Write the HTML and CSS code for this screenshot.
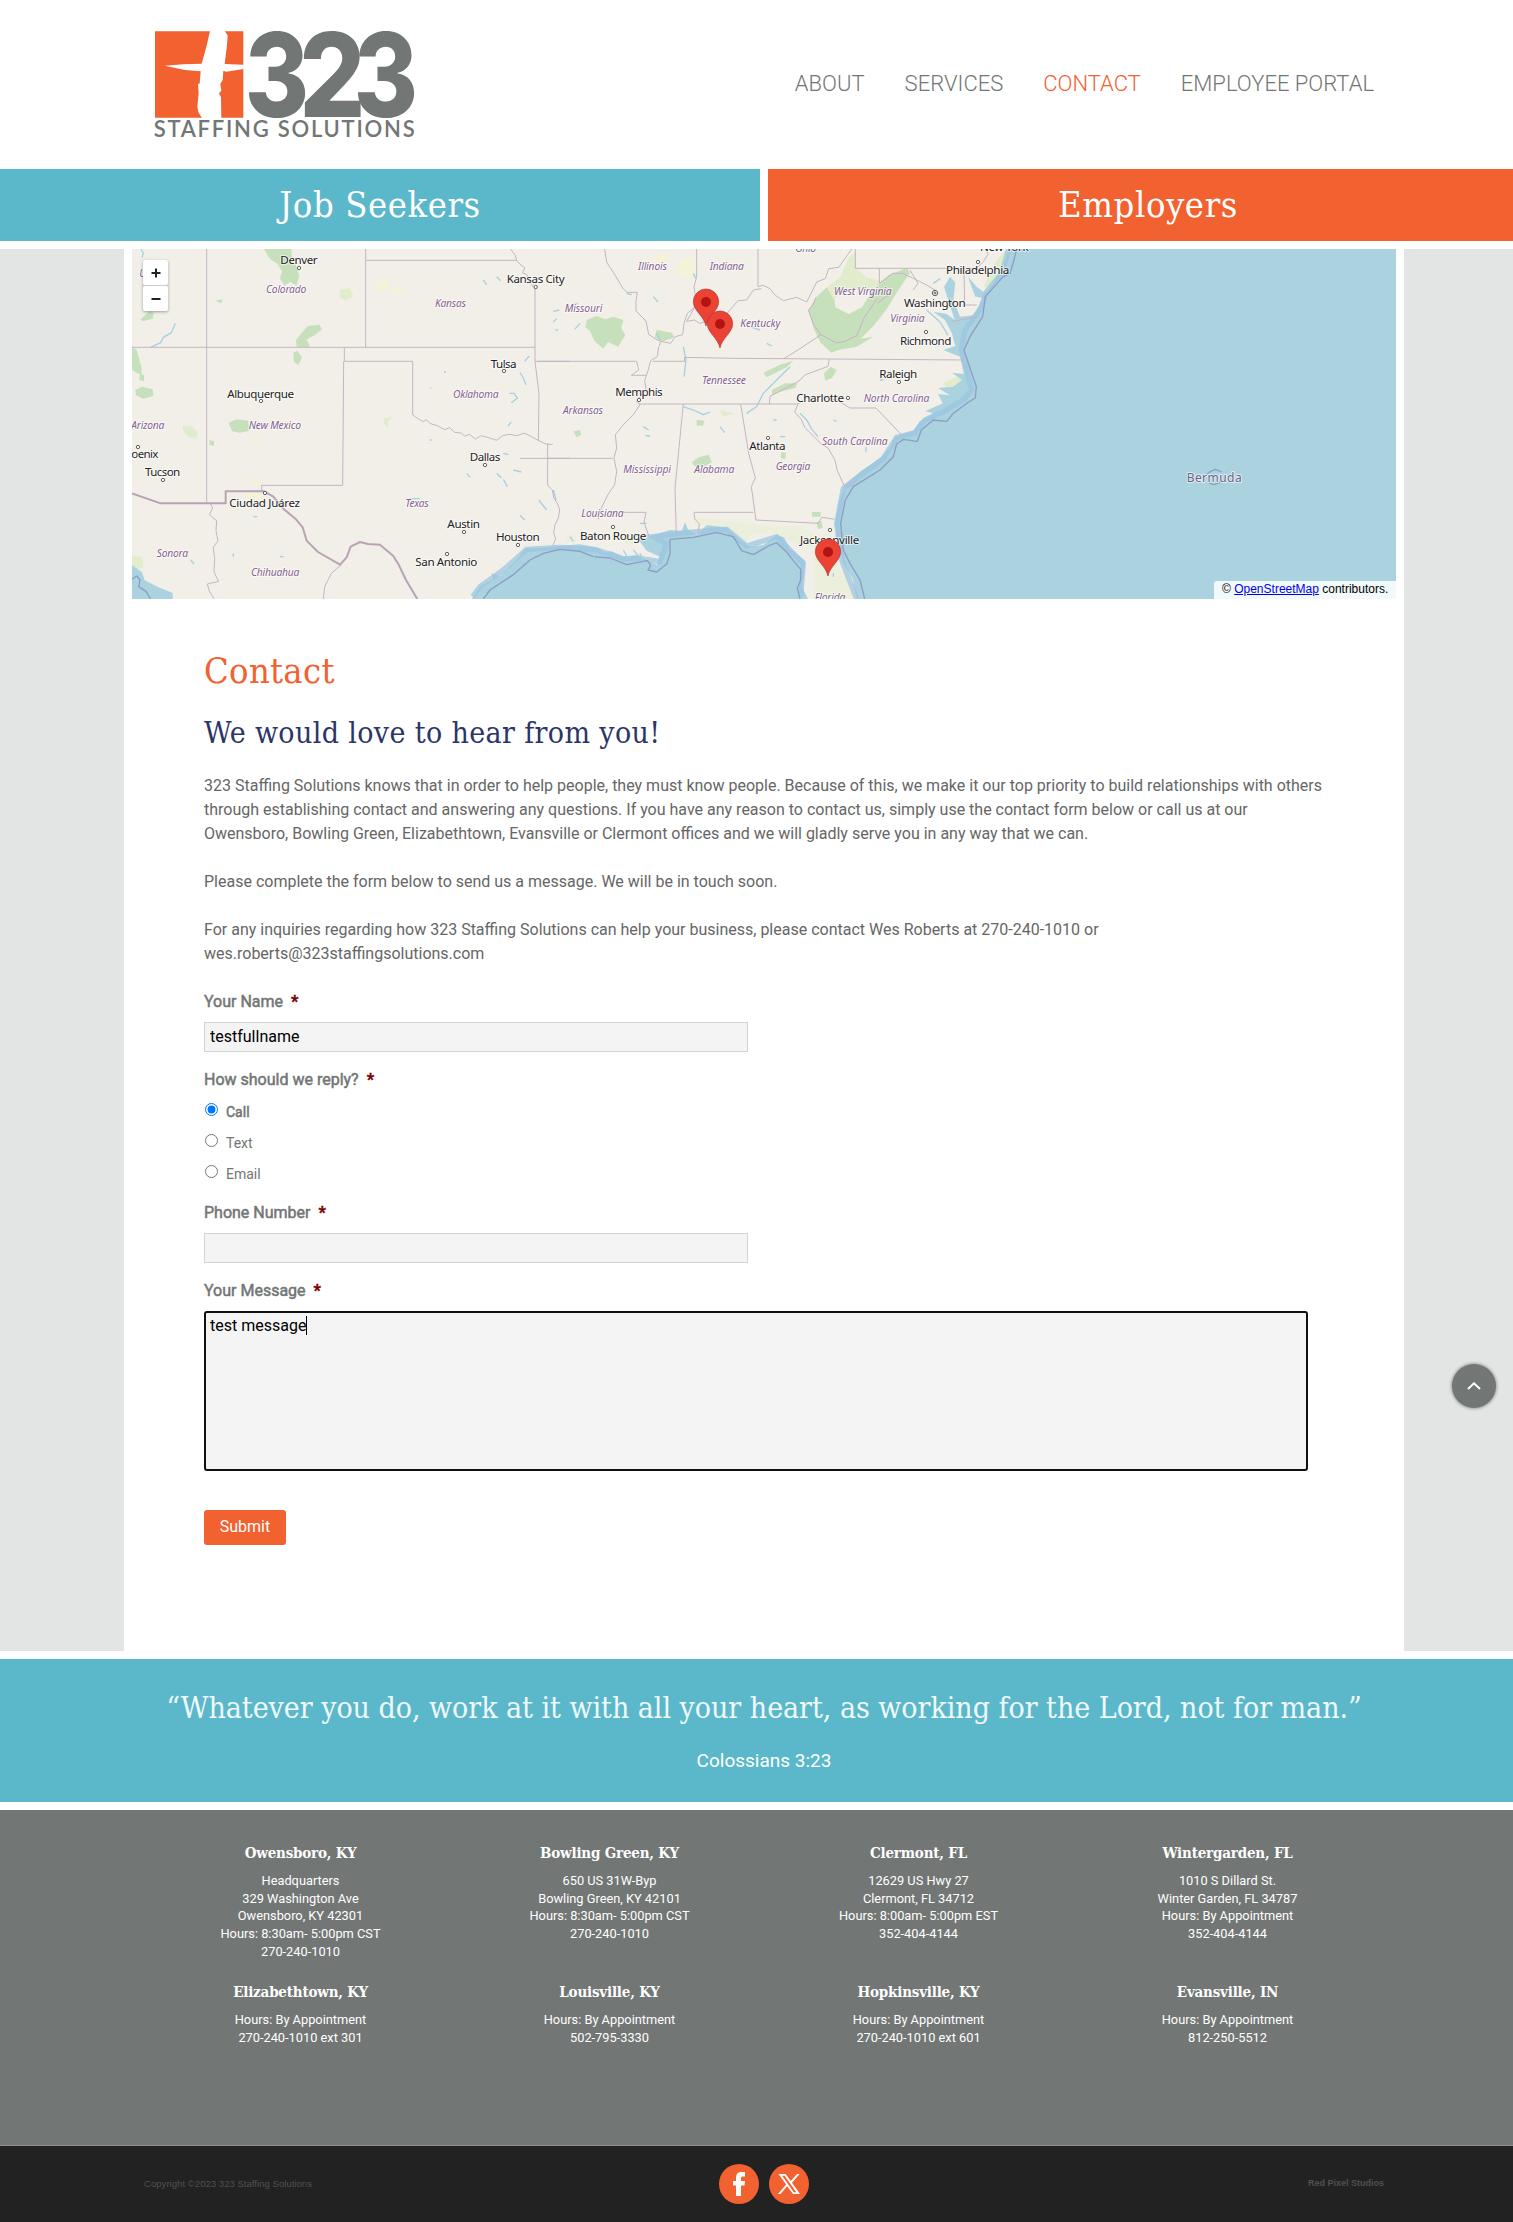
FILE: index.html
```html
<!DOCTYPE html>
<html lang="en">
<head>
<meta charset="utf-8">
<title>Contact | 323 Staffing Solutions</title>
<link rel="stylesheet" href="styles.css">
</head>
<body>
<div class="page">
  <header class="header">
    <svg class="logo" viewBox="48 72 840 360" role="img" aria-label="323 Staffing Solutions">
      <path class="logo-box" d="M75 94H340V353H75Z"/>
      <path class="logo-cross" d="M240 93L284 93L293 106L291 135L284 192L341 194V207L288 215L280 212L278 240L271 252L274 272L267 280L273 292L274 354H216L206 338L202 320L206 280L204 253L209 250L212 214L165 210L104 197L160 193L215 191L230 137Z"/>
      <g class="logo-num">
        <text transform="translate(344 352) scale(.84 1)">3</text>
        <text transform="translate(508 352) scale(.89 1)">2</text>
        <text transform="translate(671 352) scale(.84 1)">3</text>
      </g>
      <text class="logo-sub" x="71" y="412" textLength="783">STAFFING SOLUTIONS</text>
    </svg>
    <nav class="nav">
      <a>ABOUT</a><a>SERVICES</a><a class="active">CONTACT</a><a>EMPLOYEE PORTAL</a>
    </nav>
  </header>

  <div class="cta">
    <a class="cta-item teal">Job Seekers</a>
    <a class="cta-item orange">Employers</a>
  </div>

  <div class="main">
    <main class="card">
      <div class="map">
        <svg class="map-svg" viewBox="0 0 1264 350">
          <g transform="translate(-12 -9) scale(.33333)">
            <g class="green">
              <path d="M432 27h82l2 30 12 20 10 30-8 30-20-12-16 12-14-22 6-20-12-22-24-16z"/>
              <path d="M528 300l16-20 20-22 34-4 8 14-22 18-24 12 10 22-40 2z"/>
              <path d="M36 320l14 10 14 50 2 26-14-6-16-10zM46 450l20-10 32 8 2 20-30 8-22-10zM60 400l12 6v18l-14-4z"/>
              <path d="M326 548l24-10 34 4 4 30-30 6-22-4zM520 338l12-6 14 20-10 22-14-8zM268 600l14 4v14l-14-4zM284 182l24-4-4 12zM62 238l26-24 14 4-4 18-30 8z"/>
              <path class="pale" d="M190 556l24 2 20 20-6 16-24-4-16-20zM660 150l28-6 12 24-24 14-16-8zM790 535l30-4-18 14 6 20-14-10zM36 946l30 4 4 30-20 12-14-14z"/>
            </g>
            <path class="sand" d="M378 715l30 2 20 22-24-4zM398 590l18-2-4 24-12-6zM770 120l34 0-4 30-30 6zM820 140l36 4-10 20-30-8zM370 760l60-2 6 20-60-6z"/>
            <path class="water" d="M36 975l30 22 8 24 40 20 44 18v18H36Z"/>
            <path class="sea-line" d="M36 1018l14-10 10 12-4 20 22 14 14 23"/>
            <g class="river">
              <path d="M166 250l-12 28-24 14-8 16-30 14M62 27l8 12-4 14M1200 398l10 16 8 20M1168 460l14 0 10 14-18 14M1228 348l-14 16M1150 718l12 22M1130 700l14 14M1256 780l24 30M1200 826l14 14M1300 750l8 30M1318 210l-18 4M1310 236l-10 10M1090 120l10 14M1174 546l-10 12M972 396h6M930 444h4M930 600h6M400 830h12M340 940v10M480 950h10M212 960l10 12M1150 640l16 4M1180 690l24 6M1040 700l10 12M1306 270h8M870 776h30M1130 110l12 12"/>
            </g>
            <g class="state">
              <path d="M260 27V790M36 322H1245M737 27V322M737 61H1190M673 322V364H878V525M671 364L668 736H425V755M1245 140V364L1257 460L1255 602M1245 364H1350M1283 610V736M1283 655H1350M1190 61l10 12 14 10-6 16 12 4 8 20 12 18M1172 27l14 20 4 14"/>
              <path d="M878 525l18 12 14 8 8-6 14 12 20 6 22 12 14-6 16 14 20 2 10 10 14-6 18 14 18-10 22 6 24 8 18-14 20-4 24 4 20-8 24 12 18 10 26 12h18"/>
              <path d="M1283 736l14 14 4 22 12 20 6 18-4 24-10 20-4 24 6 18-8 20"/>
              <path d="M270 790l8 14-10 20 22 18-2 30 6 30-14 20 4 34-2 40 14 28-34 8 6 22 14 22M664 974l-30 26-20 40-4 37"/>
            </g>
            <path class="country" d="M36 760L122 790H317V754H432L460 770L490 806L528 838L548 862L560 902L594 936L660 974L680 952L692 920L720 906L744 912L780 914L796 928L820 948L836 974L858 1020L892 1077"/>

            <g transform="translate(1320 0)">
              <g class="green">
                <path d="M746 210l24-40 30-28 20 10 6 50 40 20 40-20 30-50 50-46 54-22 10 14-40 60-30 50-40 50-36 36-40 24-50 20-32-30-20-40z"/>
                <path class="pale" d="M800 142l40-30 24-56 20-20 4 46 30 30 40 10-6 30-50-6-50 10-32 20z"/>
                <path d="M80 240l30-12 26 10 24-8 30 10-6 24 12 22-22 34-30-14-14 20-26-22-14-30-14-12zM820 320l60-20 60-10-50 30-70 12zM636 450l40-20 36 0-6 14-40 10-30 10zM610 398l50-24 40-12-20 20-60 30zM792 400l20-20 18 10-14 24-20 8zM40 574l20-4 4 14-14 8zM396 666l20-14 30-8 10 22-24 14-30-2zM410 540l24 2-6 16-18-2zM756 816h26v14h-26zM664 636l14 2-2 20-14-4zM770 846l14-4 4 22-14 4zM290 270l44 8 10 14-40 14-20-14z"/>
                <path class="pale" d="M480 510l44 10-34 10zM600 626l16 0-8 10zM1270 140l40-80 30-33-8 60-34 56zM1150 430l60-30-6 40-30 20z"/>
                <path class="palest" d="M404 830l100 14 90 10 60 4 60 0 60 30 40-10 10 40-60 10-60-20-60-30-60 0-30 30-50-50-100-2zM20 880l30 10-6 20-30-6zM180 880l60 8 20 20-60 6zM760 940l60 20 40 50 20 67-120 0 4-60z"/>
              </g>
              <path class="sand" d="M360 60l36-10 20 40-30 24-40-10zM280 50l40-10 10 20-40 14z"/>
              <path class="water" d="M-265 1077L-240 1038L-200 1018L-206 1000L-180 1008L-130 960L-105 925L-70 925L0 918L60 913L110 922L130 936L155 934L190 950L230 945L290 975L300 950L260 932L236 900L280 886L330 870L366 872L375 846L384 868L410 884L440 856L500 862L540 900L570 920L610 915L650 885L672 892L690 926L735 962L732 1000L726 1040L744 1077H890L878 1016L850 968L832 905L825 850L838 780L855 735L900 695L960 655L988 625L1005 590L1060 572L1078 545L1120 520L1095 514L1148 490L1134 462L1170 466L1134 444L1180 440L1206 420L1176 398L1212 402L1200 350L1150 330L1186 318L1176 280L1155 240L1120 215L1160 222L1184 240L1168 190L1152 140L1170 110L1186 128L1180 180L1200 230L1240 226L1256 200L1268 174L1246 170L1224 110L1250 140L1276 160L1300 130L1330 80L1345 27H2508V1077Z"/>
              <path class="shelf" d="M-262 1070L-240 1040L-170 990L-100 928L0 922L110 930L190 956L240 955L300 965L320 910L280 890L400 876L500 868L560 918L650 890L700 940L730 970L722 1070M890 1077L845 960L830 850L850 745L970 655L1010 592L1065 578L1095 540L1150 515L1210 480L1235 450L1220 390L1204 330L1215 270L1262 205L1280 155L1325 100L1346 27"/>
              <path class="sea-line" d="M-230 1077L-210 1050L-140 1004L-90 960L-50 940L0 928L60 934L100 950L150 954L200 974L262 962L272 976L264 990L290 996L320 972L330 942L330 898L400 892L470 878L520 890L545 932L580 944L625 918L650 908L680 936L700 962L722 988L722 1020L712 1045L720 1077M914 1077L900 1020L870 970L850 930L842 850L856 780L880 740L960 690L1000 650L1010 612L1030 598L1072 604L1084 570L1120 540L1160 544L1180 520L1226 486L1246 474L1249 440L1232 390L1212 330L1230 290L1268 230L1276 170L1330 110L1350 100L1362 60L1370 27"/>
              <g class="river">
                <path d="M720 520l20 20 14 26 20 24M560 520l30-20 20-40 40-40 40-40M370 320l8 40-6 50M370 500l30 10 30 14 20-8M250 560l16 10M256 586l14 2M480 560l14 18M918 622v14M820 540l10 4M876 590h6M660 590l16 0M290 280l10 20M640 540h10M570 260l30 10M60 250l-16 18M40 190h14M200 160l16 4M400 100l8 16M1100 210l40 36 24 40M1120 130l20-14M190 930l14 24M220 930l16 18M240 940l8 20M240 850h20M120 960l20 8M100 950l10 18M30 890l10 14M800 980v20M820 1000v10M280 170l14 16M620 310l16 8M960 420h10"/>
              </g>
              <g class="state">
                <path d="M134 27l6 40 20 30 30 50 12 10 30 0-4 26 0 30 30 30 8 40 24 16 10 4M298 318l4-14 30 6 14-20 22-6 4-34 10-30 20-16M410 27V110l-8 30 6 40-8 30-20 34 24-4 14 10 24-6 16 2 30-10 20-24 26-30 26-2 20-30 24-4M594 27V140l16-4 20 10 16 20 24 16 40-10 30 14 30-60 26-10 10-30 30-4 40-56 0-33M886 27V85H1250M958 85V130l40-30 30 0 30 14 40 20 30 18M1050 90l24 40-14 20M952 190l40-30M746 210l12-14 10-24M783 284l-22-30-16-44M783 284l44 24 24-2 40-20 20-50 40-60M783 284L714 330L672 356"/>
                <path d="M-66 364H230l6 26-22 16h44M296 320l-4 30-20 12-8 30-10 30 4 26-28 36 10 10-20 30-30 30-24 30 4 40-8 30 8 40-6 40-20 30-20 40-10 34M278 364H374V352L520 355L808 357L1210 360M808 357l-4 22-70 26-14 16-40 22-50 26-2 24M236 492H714l-10 24 20 22 10 24 50 50 20 12 20 34 8 34 20 44h30M714 492l26-20 40-4 50 12 40 24H948L1024 584M-120 655H158M370 492L345 745L349 885M542 492L566 640L586 714L574 740L588 840L774 850L786 832L824 838M190 817H258l-6 30 14 40M580 817H402l2 20 14 14-4 30M1250 85l20-20 14-22-6-16M1212 85L1214 195H1250M1176 244L1250 232"/>
              </g>
              <g class="city">
                <text x="-839" y="72" textLength="112">Denver</text><text x="-160" y="129" textLength="174">Kansas City</text>
                <text x="-998" y="473" textLength="200">Albuquerque</text><text x="-208" y="383" textLength="78">Tulsa</text>
                <text x="-1286" y="655" textLength="81">oenix</text><text x="-1245" y="708" textLength="106">Tucson</text>
                <text x="-992" y="800" textLength="212">Ciudad Juárez</text><text x="-271" y="663" textLength="92">Dallas</text>
                <text x="-338" y="864" textLength="98">Austin</text><text x="-192" y="904" textLength="131">Houston</text>
                <text x="-434" y="979" textLength="186">San Antonio</text><text x="60" y="899" textLength="199">Baton Rouge</text>
                <text x="166" y="468" textLength="142">Memphis</text><text x="568" y="630" textLength="109">Atlanta</text>
                <text x="709" y="485" textLength="143">Charlotte</text><text x="958" y="414" textLength="114">Raleigh</text>
                <text x="1020" y="314" textLength="154">Richmond</text><text x="1032" y="202" textLength="185">Washington</text>
                <text x="1158" y="103" textLength="190">Philadelphia</text><text x="1260" y="32" textLength="146">New York</text>
                <text x="720" y="912" textLength="178">Jacksonville</text>
              </g>
              <g class="region">
                <text x="-1262" y="112" textLength="44">Uta</text>
                <text x="-882" y="159" textLength="121">Colorado</text><text x="-375" y="202" textLength="93">Kansas</text>
                <text x="-1286" y="567" textLength="99">Arizona</text><text x="-934" y="568" textLength="157">New Mexico</text>
                <text x="-321" y="475" textLength="137">Oklahoma</text><text x="-464" y="802" textLength="70">Texas</text>
                <text x="-1210" y="952" textLength="94">Sonora</text><text x="-927" y="1007" textLength="145">Chihuahua</text>
                <text x="14" y="217" textLength="113">Missouri</text><text x="9" y="521" textLength="120">Arkansas</text>
                <text x="234" y="89" textLength="87">Illinois</text><text x="449" y="90" textLength="103">Indiana</text>
                <text x="706" y="36" textLength="62">Ohio</text><text x="541" y="262" textLength="120">Kentucky</text>
                <text x="822" y="166" textLength="173">West Virginia</text><text x="991" y="247" textLength="103">Virginia</text>
                <text x="426" y="431" textLength="132">Tennessee</text><text x="911" y="487" textLength="197">North Carolina</text>
                <text x="786" y="615" textLength="197">South Carolina</text><text x="647" y="691" textLength="104">Georgia</text>
                <text x="190" y="699" textLength="143">Mississippi</text><text x="403" y="699" textLength="120">Alabama</text>
                <text x="64" y="831" textLength="127">Louisiana</text><text x="764" y="1083" textLength="92">Florida</text>
              </g>
              <g class="dot">
                <circle cx="-783" cy="84" r="5"/><circle cx="-73" cy="141" r="5"/><circle cx="-897" cy="483" r="5"/><circle cx="-168" cy="393" r="5"/>
                <circle cx="-1266" cy="621" r="5"/><circle cx="-1191" cy="720" r="5"/><circle cx="-885" cy="759" r="5"/><circle cx="-225" cy="675" r="5"/>
                <circle cx="-288" cy="876" r="5"/><circle cx="-126" cy="915" r="5"/><circle cx="-339" cy="942" r="5"/><circle cx="159" cy="861" r="5"/>
                <circle cx="237" cy="480" r="5"/><circle cx="624" cy="594" r="5"/><circle cx="864" cy="474" r="5"/><circle cx="1017" cy="426" r="5"/>
                <circle cx="1098" cy="276" r="5"/><circle cx="1125" cy="159" r="8"/><circle cx="1125" cy="159" r="3"/><circle cx="1254" cy="66" r="5"/><circle cx="810" cy="870" r="5"/>
              </g>
              <path class="sea-line" d="M1938 706l14-12 14-6 20 8M1946 728l14 6 20-6"/>
              <text class="island" x="1880" y="725" textLength="165">Bermuda</text>
              <g class="pin">
                <path d="M438 258C432 228 400 212 400 185A38 38 0 0 1 476 185C476 212 444 228 438 258Z"/><circle cx="438" cy="186" r="15"/>
                <path d="M480 324C474 294 442 278 442 251A38 38 0 0 1 518 251C518 278 486 294 480 324Z"/><circle cx="480" cy="252" r="15"/>
                <path d="M804 1008C798 978 766 962 766 935A38 38 0 0 1 842 935C842 962 810 978 804 1008Z"/><circle cx="804" cy="936" r="15"/>
              </g>
            </g>
          </g>
        </svg>
        <div class="zoom">
          <button class="zoom-btn" aria-label="Zoom in"><svg viewBox="0 0 10 10"><path d="M5 0.5V9.5M.5 5H9.5"/></svg></button>
          <button class="zoom-btn" aria-label="Zoom out"><svg viewBox="0 0 10 10"><path d="M.5 5H9.5"/></svg></button>
        </div>
        <div class="credit">© <a href="#">OpenStreetMap</a> contributors.</div>
      </div>

      <section class="content">
        <h1 class="title">Contact</h1>
        <h2 class="subtitle">We would love to hear from you!</h2>
        <p class="text">323 Staffing Solutions knows that in order to help people, they must know people. Because of this, we make it our top priority to build relationships with others<br>through establishing contact and answering any questions. If you have any reason to contact us, simply use the contact form below or call us at our<br>Owensboro, Bowling Green, Elizabethtown, Evansville or Clermont offices and we will gladly serve you in any way that we can.</p>
        <p class="text">Please complete the form below to send us a message. We will be in touch soon.</p>
        <p class="text">For any inquiries regarding how 323 Staffing Solutions can help your business, please contact Wes Roberts at 270-240-1010 or<br>wes.roberts@323staffingsolutions.com</p>
        <form class="form">
          <div class="field">
            <label class="label">Your Name<b class="req">*</b></label>
            <input class="input" type="text" value="testfullname">
          </div>
          <div class="field choices">
            <label class="label">How should we reply?<b class="req">*</b></label>
            <label class="choice picked"><input type="radio" name="r" checked>Call</label>
            <label class="choice"><input type="radio" name="r">Text</label>
            <label class="choice"><input type="radio" name="r">Email</label>
          </div>
          <div class="field">
            <label class="label">Phone Number<b class="req">*</b></label>
            <input class="input" type="text">
          </div>
          <div class="field">
            <label class="label">Your Message<b class="req">*</b></label>
            <div class="area">test message<span class="caret"></span></div>
          </div>
          <button class="submit" type="button">Submit</button>
        </form>
      </section>
    </main>
  </div>

  <section class="quote">
    <p class="verse">“Whatever you do, work at it with all your heart, as working for the Lord, not for man.”</p>
    <p class="source">Colossians 3:23</p>
  </section>

  <section class="offices">
    <div class="office"><h3>Owensboro, KY</h3><p>Headquarters<br>329 Washington Ave<br>Owensboro, KY 42301<br>Hours: 8:30am- 5:00pm CST<br>270-240-1010</p></div>
    <div class="office"><h3>Bowling Green, KY</h3><p>650 US 31W-Byp<br>Bowling Green, KY 42101<br>Hours: 8:30am- 5:00pm CST<br>270-240-1010</p></div>
    <div class="office"><h3>Clermont, FL</h3><p>12629 US Hwy 27<br>Clermont, FL 34712<br>Hours: 8:00am- 5:00pm EST<br>352-404-4144</p></div>
    <div class="office"><h3>Wintergarden, FL</h3><p>1010 S Dillard St.<br>Winter Garden, FL 34787<br>Hours: By Appointment<br>352-404-4144</p></div>
    <div class="office"><h3>Elizabethtown, KY</h3><p>Hours: By Appointment<br>270-240-1010 ext 301</p></div>
    <div class="office"><h3>Louisville, KY</h3><p>Hours: By Appointment<br>502-795-3330</p></div>
    <div class="office"><h3>Hopkinsville, KY</h3><p>Hours: By Appointment<br>270-240-1010 ext 601</p></div>
    <div class="office"><h3>Evansville, IN</h3><p>Hours: By Appointment<br>812-250-5512</p></div>
  </section>

  <footer class="footer">
    <span class="copy">Copyright ©2023 323 Staffing Solutions</span>
    <div class="social">
      <a class="social-link"><svg viewBox="0 0 40 40"><path d="M17 32V21.500H14V17H17V14C17 10 19 8 22.500 8H26V12.500H23.600C22.300 12.500 22 13.200 22 14.300V17H26L25.500 21.500H22V32Z"/></svg></a>
      <a class="social-link"><svg viewBox="0 0 40 40"><path fill-rule="evenodd" d="M9.500 10H16.500L21.800 17.100L28 10H30.600L23 18.700L31 30H24L18.200 22.200L11.500 30H8.900L17.100 20.600ZM13.200 11.800L24.800 28.200H27.300L15.600 11.800Z"/></svg></a>
    </div>
    <span class="credits">Red Pixel Studios</span>
  </footer>
  <a class="to-top" aria-label="Back to top"><svg viewBox="0 0 14 8"><path d="M1 7L7 1.300L13 7"/></svg></a>
</div>
</body>
</html>
```
FILE: styles.css
```css
* { box-sizing: border-box; }
body { margin: 0; background: #fff; overflow: hidden; font-family: Roboto, sans-serif; color: #666; }
h1, h2, h3, p { margin: 0; font-weight: 400; }
.page { position: relative; width: 1528px; }

.header { display: flex; justify-content: space-between; height: 169px; padding: 24px 154px 0 146px; }
.logo { width: 280px; height: 120px; overflow: visible; }
.logo-box { fill: #f26130; }
.logo-cross { fill: #fff; }
.logo-num { fill: #727675; font: 800 350px Inter, sans-serif; }
.logo-sub { fill: #727675; font: 600 66px Lato, sans-serif; }
.nav { display: flex; gap: 40px; padding-top: 44px; font-size: 22px; line-height: 32px; font-weight: 300; color: #727675; white-space: nowrap; }
.nav .active { color: #f26130; }

.cta { display: flex; gap: 8px; height: 72px; }
.cta-item { flex: 1; color: #fff; text-align: center; letter-spacing: .6px; font: 400 36px/72px "Roboto Slab", "DejaVu Serif Condensed", "DejaVu Serif", serif; }
.teal { background: #5ab8ca; }
.orange { background: #f26130; }

.main { display: flex; justify-content: center; margin-top: 8px; height: 1402px; background: #e2e5e4; }
.card { width: 1280px; padding: 0 8px; background: #fff; }
.map { position: relative; height: 350px; overflow: hidden; background: #f2efe9; }
.map-svg { display: block; width: 1264px; height: 350px; }
.green { fill: #b9dcae; opacity: .75; }
.green .pale { fill: #dcecc4; }
.green .palest { fill: #e9f0d8; }
.sand { fill: #f4f2d8; }
.water { fill: #aad3df; }
.shelf { fill: none; stroke: #98c4e0; stroke-width: 16; opacity: .7; }
.sea-line { fill: none; stroke: #8f9cc6; stroke-width: 4; stroke-linejoin: round; }
.river { fill: none; stroke: #a5d2df; stroke-width: 4; }
.state { fill: none; stroke: #c3b5c3; stroke-width: 3; stroke-linejoin: round; }
.country { fill: none; stroke: #b8a3b5; stroke-width: 6; stroke-linejoin: round; }
.city, .region, .island { font-family: "Noto Sans", sans-serif; paint-order: stroke; stroke: #fff; stroke-opacity: .6; stroke-width: 6; stroke-linejoin: round; }
.city { font-size: 35px; fill: #222; }
.region { font-size: 31px; font-style: italic; fill: #84618f; }
.island { font-size: 36px; fill: #6d6288; }
.dot { fill: #fff; stroke: #444; stroke-width: 2.500; }
.pin path { fill: #ea4335; stroke: #b8332a; stroke-width: 2; }
.pin circle { fill: #b31412; }
.zoom { position: absolute; left: 11px; top: 11px; width: 25px; border-radius: 2px; box-shadow: 0 1px 3px rgba(0,0,0,.35); background: #ccc; display: grid; gap: 1px; }
.zoom-btn { display: flex; align-items: center; justify-content: center; height: 25px; padding: 0; border: 0; border-radius: 2px; background: #fff; }
.zoom-btn svg { width: 10px; height: 10px; fill: none; stroke: #222; stroke-width: 2; }
.credit { position: absolute; right: 0; bottom: 0; width: 182px; height: 18px; padding-left: 8px; border-radius: 3px 0 0 0; background: rgba(255,255,255,.85); color: #000; font: 12px/16px "Liberation Sans", Arial, sans-serif; }
.credit a { color: #00e; }

.content { padding: 48px 72px 0; white-space: nowrap; }
.title { height: 66px; letter-spacing: .3px; font: 400 36px/48px "Roboto Slab", "DejaVu Serif Condensed", "DejaVu Serif", serif; color: #f26130; }
.subtitle { height: 61px; letter-spacing: .36px; font: 400 30px/40px "Roboto Slab", "DejaVu Serif Condensed", "DejaVu Serif", serif; color: #2c3566; }
.text { margin-bottom: 24px; font-size: 16px; line-height: 24px; color: #666; }
.form { display: flex; flex-direction: column; align-items: flex-start; }
.field { display: flex; flex-direction: column; margin-bottom: 16px; }
.label { height: 32px; font-size: 16px; line-height: 24px; color: #727675; -webkit-text-stroke: .5px #727675; }
.req { margin-left: 8px; color: #790000; font-weight: 800; -webkit-text-stroke: .4px #790000; }
.input { width: 544px; height: 30px; margin: 0; padding: 0 5px 1px; border: 1px solid #d3d3d3; background: #f4f4f4; color: #000; font: 16px/26px Roboto, sans-serif; }
.choices { margin-bottom: 11px; }
.choices .label { height: 29px; }
.choice { display: flex; height: 31px; font-size: 14px; line-height: 31px; color: #727675; }
.picked { -webkit-text-stroke: .5px #727675; }
.choice input { width: 13px; height: 13px; margin: 6px 8px 0 1px; }
.area { width: 1104px; height: 160px; padding: 2px 4px; border: 2px solid #101010; border-radius: 3px; background: #f4f4f4; color: #000; font-size: 16px; line-height: 21px; }
.caret { display: inline-block; width: 1px; height: 19px; background: #000; vertical-align: -4px; }
.submit { width: 82px; height: 35px; margin-top: 23px; padding: 0 0 2px; border: 0; border-radius: 3px; background: #f26130; color: #fff; font: 16px Roboto, sans-serif; }

.quote { height: 143px; margin-top: 8px; padding-top: 28px; background: #5ab8ca; color: #fff; text-align: center; white-space: nowrap; }
.verse { letter-spacing: -.03px; color: #f0f9fb; font: 300 30px/42px "Roboto Slab", "DejaVu Serif Condensed", "DejaVu Serif", serif; }
.source { margin-top: 19px; font-size: 19px; line-height: 26px; }

.offices { display: grid; grid-template-columns: repeat(4, 309px); grid-template-rows: 139px auto; justify-content: center; height: 335px; margin-top: 8px; padding-top: 32px; background: #727675; color: #fff; text-align: center; }
.office h3 { letter-spacing: -.2px; font: 700 15px/22px "Roboto Slab", "DejaVu Serif Condensed", "DejaVu Serif", serif; }
.office p { margin-top: 8px; font-size: 12.800px; line-height: 17.700px; }

.footer { display: grid; grid-template-columns: 1fr auto 1fr; align-items: center; height: 77px; padding: 0 144px; border-top: 1px solid #8e9090; background: #222; color: #505050; font: 9.600px "Liberation Sans", Arial, sans-serif; }
.copy, .credits { padding-bottom: 2px; }
.social { display: flex; gap: 10px; }
.social-link { width: 40px; height: 40px; border-radius: 50%; background: #f26130; }
.social-link svg { display: block; fill: #fff; }
.credits { text-align: right; font-size: 9px; font-weight: 700; }
.to-top { position: absolute; left: 1452px; top: 1364px; display: flex; align-items: center; justify-content: center; width: 44px; height: 44px; border-radius: 50%; background: #727675; box-shadow: 0 0 3px 1px rgba(0,0,0,.3); }
.to-top svg { width: 14px; height: 8px; fill: none; stroke: #fff; stroke-width: 2; }
```
